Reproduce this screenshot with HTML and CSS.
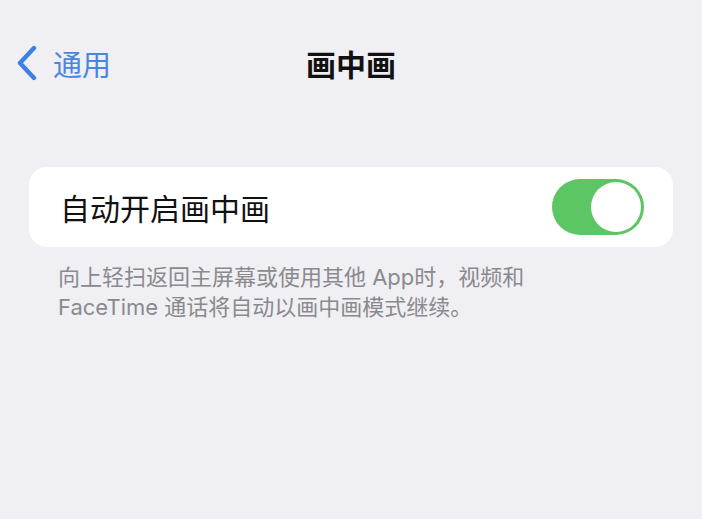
FILE: index.html
```html
<!DOCTYPE html>
<html lang="zh-CN">
<head>
<meta charset="utf-8">
<link rel="stylesheet" href="styles.css">
</head>
<body>
<div class="page">
  <header class="nav">
    <a class="back">
      <svg class="chev" width="22" height="36" viewBox="0 0 22 36"><path d="M18 3 L4 18 L18 33" fill="none" stroke="#3e7fe6" stroke-width="4.4" stroke-linecap="round" stroke-linejoin="round"/></svg>
      <span class="back-text">通用</span>
    </a>
    <h1 class="title">画中画</h1>
    <span class="spacer"></span>
  </header>
  <section class="card">
    <span class="label">自动开启画中画</span>
    <span class="toggle"><span class="knob"></span></span>
  </section>
  <p class="footer">向上轻扫返回主屏幕或使用其他 App时，视频和<br>FaceTime 通话将自动以画中画模式继续。</p>
</div>
</body>
</html>
```
FILE: styles.css
```css
html, body {
  margin: 0;
  padding: 0;
  background: #f0eff4;
}
body {
  font-family: "Inter", "Noto Sans CJK SC", sans-serif;
  width: 702px;
  height: 519px;
  overflow: hidden;
}
.page {
  display: flex;
  flex-direction: column;
}
.nav {
  display: grid;
  grid-template-columns: 1fr auto 1fr;
  align-items: center;
  padding: 40px 16px 0 16px;
  height: 46px;
}
.back {
  display: flex;
  align-items: center;
  gap: 15px;
}
.chev {
  display: block;
}
.back-text {
  font-family: "Noto Sans CJK SC", sans-serif;
  font-size: 29px;
  color: #4a86e0;
  line-height: 34px;
}
.title {
  margin: 0;
  font-family: "Noto Sans CJK SC", sans-serif;
  font-size: 30px;
  font-weight: 700;
  color: #111;
  line-height: 34px;
}
.card {
  margin: 81px 29px 0 29px;
  height: 80px;
  background: #fff;
  border-radius: 18px;
  display: flex;
  align-items: center;
  justify-content: space-between;
  padding: 0 29px 0 31px;
}
.label {
  font-family: "Noto Sans CJK SC", sans-serif;
  font-size: 30px;
  color: #111;
  line-height: 36px;
}
.toggle {
  width: 92px;
  height: 56px;
  border-radius: 28px;
  background: #5cc564;
  display: flex;
  align-items: center;
  justify-content: flex-end;
  padding: 0 3px;
  box-sizing: border-box;
}
.knob {
  width: 50px;
  height: 50px;
  border-radius: 50%;
  background: #fff;
}
.footer {
  margin: 15px 40px 0 58px;
  font-size: 22px;
  line-height: 30px;
  color: #8a8a8e;
}
```
